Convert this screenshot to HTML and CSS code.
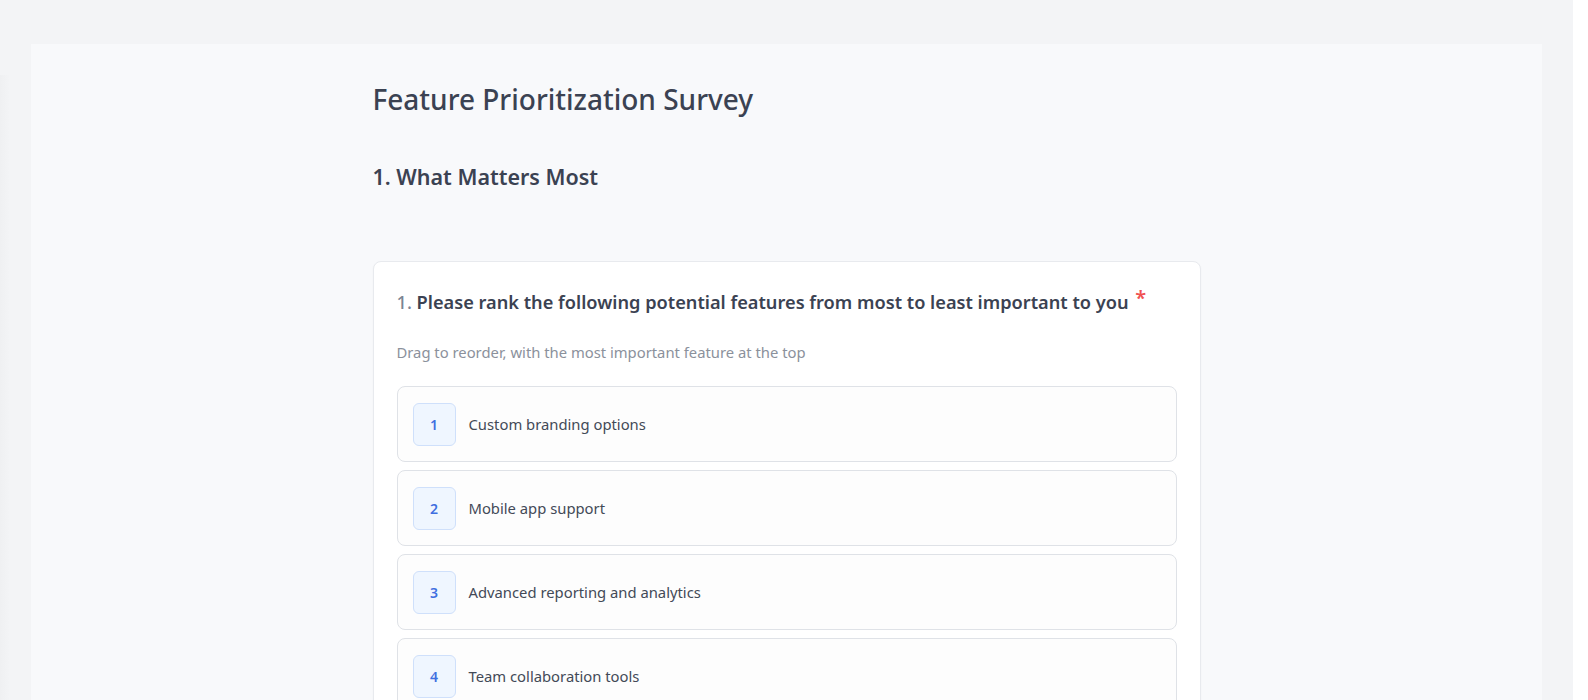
FILE: index.html
```html
<!DOCTYPE html>
<html lang="en">
<head>
<meta charset="utf-8">
<title>Feature Prioritization Survey</title>
<link rel="stylesheet" href="styles.css">
</head>
<body>
<div class="edge-shadow"></div>
<main class="panel">
  <div class="content">
    <h1 class="survey-title">Feature Prioritization Survey</h1>
    <h2 class="section-title">1. What Matters Most</h2>
    <section class="card">
      <h3 class="question"><span class="q-num">1.</span> Please rank the following potential features from most to least important to you <span class="required">*</span></h3>
      <p class="hint">Drag to reorder, with the most important feature at the top</p>
      <ol class="rank-list">
        <li class="rank-item"><span class="badge">1</span><span class="label">Custom branding options</span></li>
        <li class="rank-item"><span class="badge">2</span><span class="label">Mobile app support</span></li>
        <li class="rank-item"><span class="badge">3</span><span class="label">Advanced reporting and analytics</span></li>
        <li class="rank-item"><span class="badge">4</span><span class="label">Team collaboration tools</span></li>
        <li class="rank-item"><span class="badge">5</span><span class="label">Third-party integrations</span></li>
      </ol>
    </section>
  </div>
</main>
</body>
</html>
```

FILE: styles.css
```css
html {
  margin: 0;
  padding: 0;
  background: #ffffff;
}
body {
  margin: 0 15px 0 0;
  padding: 44px 0 0;
  background: #f3f4f6;
  font-family: "Noto Sans", "Open Sans", sans-serif;
  color: #374151;
}
.edge-shadow {
  position: fixed;
  left: 0;
  top: 75px;
  bottom: 0;
  width: 10px;
  background: linear-gradient(to right, #eff0f2, #f3f4f6);
}
.panel {
  display: block;
  margin: 0 31px;
  background: #f8f9fb;
  padding: 37px 0 60px;
  min-height: 900px;
}
.content {
  width: 828px;
  margin: 0 auto;
}
.survey-title {
  margin: 0;
  font-size: 28px;
  line-height: 36px;
  font-weight: 500;
  color: #3b4252;
}
.section-title {
  margin: 45px 0 0;
  font-size: 21.5px;
  line-height: 30px;
  font-weight: 600;
  color: #3b4252;
}
.card {
  margin-top: 69px;
  background: #ffffff;
  border: 1px solid #e8eaee;
  border-radius: 8px;
  box-shadow: 0 1px 2px rgba(16, 24, 40, 0.04);
  padding: 26px 23px 24px;
}
.question {
  margin: 0;
  font-size: 18.2px;
  line-height: 28px;
  font-weight: 600;
  color: #3b4252;
}
.q-num {
  color: #7b8494;
  font-weight: 500;
}
.required {
  color: #f05252;
  font-size: 20px;
  position: relative;
  top: -4px;
  margin-left: 2px;
}
.hint {
  margin: 25px 0 0;
  font-size: 14.8px;
  line-height: 22px;
  color: #8b919c;
}
.rank-list {
  list-style: none;
  margin: 23px 0 0;
  padding: 0;
  display: flex;
  flex-direction: column;
  gap: 8px;
}
.rank-item {
  display: flex;
  align-items: center;
  gap: 13px;
  padding: 15.5px 16px 15.5px 15px;
  border: 1px solid #dfe2e7;
  border-radius: 8px;
  background: #fdfdfd;
}
.badge {
  flex: none;
  width: 43px;
  height: 43px;
  box-sizing: border-box;
  border: 1px solid #cfe0fb;
  border-radius: 6px;
  background: #eff6ff;
  color: #3f6fe0;
  font-size: 14px;
  font-weight: 600;
  display: flex;
  align-items: center;
  justify-content: center;
}
.label {
  font-size: 14.8px;
  color: #434a57;
}
```
